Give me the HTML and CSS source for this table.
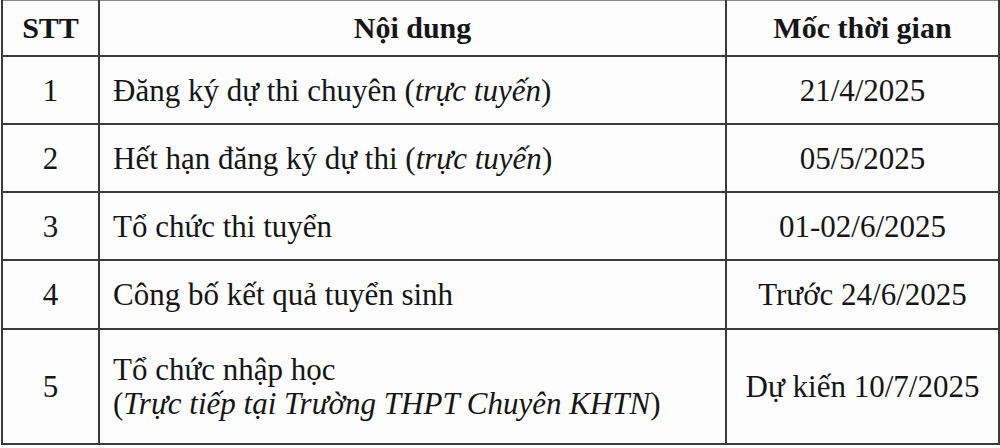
FILE: index.html
```html
<!DOCTYPE html>
<html lang="vi">
<head>
<meta charset="utf-8">
<link rel="stylesheet" href="styles.css">
</head>
<body>
<table class="schedule">
  <colgroup>
    <col class="c-stt">
    <col class="c-content">
    <col class="c-time">
  </colgroup>
  <thead>
    <tr class="head">
      <th>STT</th>
      <th>Nội dung</th>
      <th>Mốc thời gian</th>
    </tr>
  </thead>
  <tbody>
    <tr class="row">
      <td class="num">1</td>
      <td class="content">Đăng ký dự thi chuyên (<i>trực tuyến</i>)</td>
      <td class="time">21/4/2025</td>
    </tr>
    <tr class="row">
      <td class="num">2</td>
      <td class="content">Hết hạn đăng ký dự thi (<i>trực tuyến</i>)</td>
      <td class="time">05/5/2025</td>
    </tr>
    <tr class="row">
      <td class="num">3</td>
      <td class="content">Tổ chức thi tuyển</td>
      <td class="time">01-02/6/2025</td>
    </tr>
    <tr class="row row4">
      <td class="num">4</td>
      <td class="content">Công bố kết quả tuyển sinh</td>
      <td class="time">Trước 24/6/2025</td>
    </tr>
    <tr class="row tall">
      <td class="num">5</td>
      <td class="content"><span class="line">Tổ chức nhập học</span><span class="line">(<i>Trực tiếp tại Trường THPT Chuyên KHTN</i>)</span></td>
      <td class="time">Dự kiến 10/7/2025</td>
    </tr>
  </tbody>
</table>
</body>
</html>
```
FILE: styles.css
```css
html, body {
  margin: 0;
  padding: 0;
  background: #fdfdfd;
}

body {
  padding: 0 2px 0 1px;
  font-family: "Liberation Serif", "Times New Roman", serif;
  color: #151515;
}

.schedule {
  border-collapse: collapse;
  table-layout: fixed;
  width: 997px;
}

.c-stt { width: 97px; }
.c-content { width: 627px; }
.c-time { width: 273px; }

.schedule th,
.schedule td {
  border: 2px solid #3a3a3a;
  padding: 0;
  vertical-align: middle;
}

.head th {
  height: 54px;
  font-weight: bold;
  font-size: 30px;
  text-align: center;
  border-top-width: 1px;
  border-top-color: #8a8a8a;
}

.row td {
  height: 66px;
  font-size: 31px;
  line-height: 31px;
}

.row4 td { height: 67px; }

.tall td { height: 113px; }

.line {
  display: block;
  line-height: 34px;
}

.num,
.time {
  text-align: center;
}

.content {
  text-align: left;
  padding-left: 13px !important;
}
```
